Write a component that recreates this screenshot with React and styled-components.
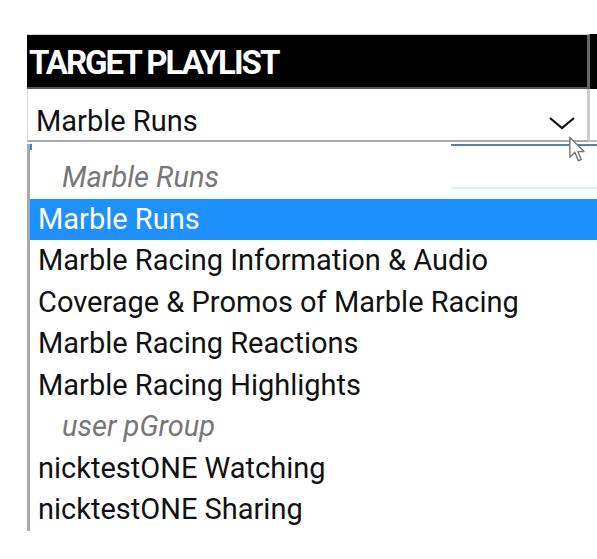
import React from "react";
import styled, { createGlobalStyle } from "styled-components";

const Global = createGlobalStyle`
  html, body { margin: 0; padding: 0; background: #fff; overflow: hidden; }
  body { width: 597px; height: 559px; font-family: Roboto, "Noto Sans", "Liberation Sans", sans-serif; }
`;

const Page = styled.div`
  position: relative;
  width: 597px;
  height: 559px;
  padding: 34px 0 0 27px;
  box-sizing: border-box;
  overflow: hidden;
`;

const Table = styled.div`
  display: grid;
  grid-template-columns: 563px 20px;
  width: 583px;
`;

const HeaderCell = styled.div`
  height: 55px;
  box-sizing: border-box;
  background: #000;
  border-top: 1px solid #d8d8d8;
  border-bottom: 2px solid #555;
  border-right: ${(p) => (p.$divider ? "3px solid #666" : "none")};
  display: flex;
  align-items: center;
  padding: 2px 0 0 2px;
  color: #fff;
  font-weight: 700;
  font-size: 33px;
  letter-spacing: -2px;
  white-space: nowrap;
`;

const SelectCell = styled.div`
  height: 53px;
  box-sizing: border-box;
  background: #fff;
  border-left: 1px solid #ddd;
  border-right: ${(p) => (p.$divider ? "3px solid #ccc" : "none")};
  border-bottom: 2px solid #a9a9a9;
  display: flex;
  align-items: flex-end;
  justify-content: space-between;
  padding: 0 11px 1px 8px;
  font-size: 29px;
  line-height: 35px;
  color: #111;
`;

const SideCell = styled.div`
  background: ${(p) => p.$bg};
  border-bottom: ${(p) => (p.$line ? "2px solid #bbb" : "none")};
`;

const Chevron = styled.svg`
  width: 28px;
  height: 14px;
  margin-bottom: 9px;
`;

const Dropdown = styled.div`
  position: relative;
  margin-top: 2px;
  width: 580px;
  border-left: 3px solid #a9a9a9;
  padding: 13px 0 0 0;
  box-sizing: border-box;
  background: #fff;
  height: 387px;
`;

const Corner = styled.span`
  position: absolute;
  left: 0;
  top: 0;
  width: 2px;
  height: 6px;
  background: #4a7fc0;
`;

const BehindLines = styled.div`
  position: absolute;
  left: 421px;
  right: -20px;
  top: 0;
  height: 41px;
  border-top: 2px solid #5b80a8;
  border-bottom: 2px solid #e0ecf8;
`;

const Row = styled.div`
  height: 41.5px;
  line-height: 41.5px;
  font-size: 29px;
  white-space: nowrap;
  padding-left: ${(p) => (p.$group ? "32px" : "8px")};
  color: ${(p) => (p.$selected ? "#fff" : p.$group ? "#777" : "#111")};
  background: ${(p) => (p.$selected ? "#1e90ff" : "transparent")};
  font-style: ${(p) => (p.$group ? "italic" : "normal")};
  position: relative;
`;

const Cursor = styled.svg`
  position: absolute;
  left: 568px;
  top: 136px;
  width: 18px;
  height: 27px;
`;

const rows = [
  { t: "Marble Runs", group: true },
  { t: "Marble Runs", selected: true },
  { t: "Marble Racing Information & Audio" },
  { t: "Coverage & Promos of Marble Racing" },
  { t: "Marble Racing Reactions" },
  { t: "Marble Racing Highlights" },
  { t: "user pGroup", group: true },
  { t: "nicktestONE Watching" },
  { t: "nicktestONE Sharing" },
];

export default function App() {
  return (
    <>
      <Global />
      <Page>
        <Table>
          <HeaderCell $divider>TARGET PLAYLIST</HeaderCell>
          <SideCell $bg="#000" />
          <SelectCell $divider>
            <span>Marble Runs</span>
            <Chevron viewBox="0 0 28 14">
              <polyline points="2,2 14,12 26,2" fill="none" stroke="#111" strokeWidth="2.2" />
            </Chevron>
          </SelectCell>
          <SideCell $bg="#fff" $line />
        </Table>
        <Dropdown>
          <Corner />
          <BehindLines />
          {rows.map((r, i) => (
            <Row key={i} $group={r.group} $selected={r.selected}>
              {r.t}
            </Row>
          ))}
        </Dropdown>
        <Cursor viewBox="0 0 12 19">
          <path
            d="M1 1 L1 15 L4.5 11.5 L7 17.5 L9 16.5 L6.6 11 L11 11 Z"
            fill="#fff"
            stroke="#777"
            strokeWidth="1"
            strokeLinejoin="round"
          />
        </Cursor>
      </Page>
    </>
  );
}
